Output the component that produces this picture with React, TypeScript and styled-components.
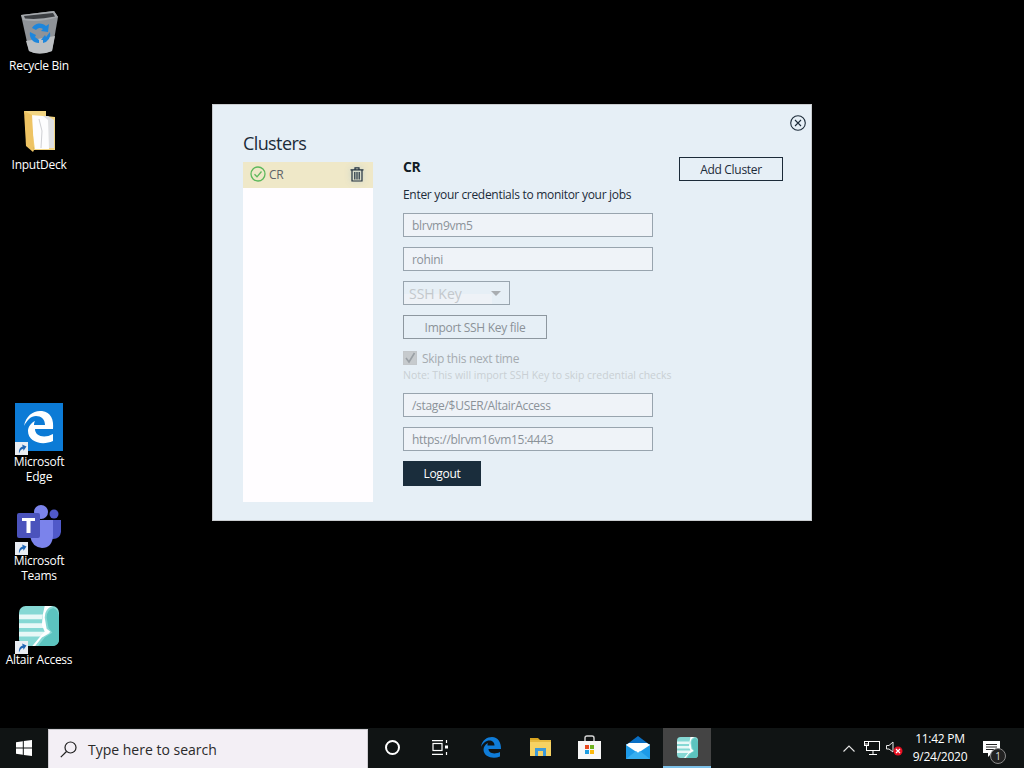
import styled, { createGlobalStyle } from 'styled-components';

const GlobalStyle = createGlobalStyle`
	html, body {
		margin: 0;
		padding: 0;
		height: 100%;
		background: #000;
		overflow: hidden;
		font-family: 'Open Sans', 'Noto Sans', sans-serif;
	}
`;

function ShortcutBadge() {
	return (
		<Badge>
			<svg width='13' height='13' viewBox='0 0 13 13'>
				<rect width='13' height='13' fill='#e9edf3' />
				<path d='M4 11.5 C3.5 7.5 5.5 5 7.8 4.6 L7 2.4 L11.5 4.6 L8.5 8.8 L8.2 6.8 C6.5 7 5.2 8.5 4 11.5Z' fill='#1f66b5' />
			</svg>
		</Badge>
	);
}

function RecycleBinIcon() {
	return (
		<svg width='37' height='43' viewBox='0 0 37 43'>
			<path d='M0 4 L33 0 L37 6 L31 40 Q18 45 8 40Z' fill='#8f9398' />
			<path d='M5 30 L34 25 L31 40 Q18 45 8 40Z' fill='#bcbfc2' />
			<path d='M0 4 L33 0 L37 6 Q18 12 2 9Z' fill='#a4a8ac' />
			<path d='M3 5 L32 2 L34 5.5 Q18 9 4 7.5Z' fill='#3b3e42' />
			<path d='M11 17 A9 9 0 0 1 25 15 L28 13 L27 21 L20 20 L22 18 A5 5 0 0 0 15 19Z M9 21 L15 24 L14 26 L18 29 L18 32 A9 9 0 0 1 9 21Z M29 21 A9 9 0 0 1 22 32 L22 29 L20 29 L24 24 L25 26 Z' fill='#1e86dc' />
		</svg>
	);
}

function FolderIcon() {
	return (
		<svg width='31' height='41' viewBox='0 0 31 41'>
			<path d='M0 0 L22 0 L22 5 L31 6 L31 39 L10 39 Z' fill='#f2d583' />
			<path d='M8 5 L24 5 L30 9 L30 37 L12 37 Z' fill='#dfe0e3' />
			<path d='M6 4 L19 5 L24 9 L25 38 L11 38 Z' fill='#fdfdfe' />
			<path d='M0 0 L8 4 L10 39 L9 41 L2 35 Z' fill='#eec363' />
			<path d='M15 8 L18 20 L17 37' stroke='#cfd0d4' strokeWidth='1' fill='none' />
		</svg>
	);
}

function EdgeTile() {
	return (
		<svg width='48' height='48' viewBox='0 0 48 48'>
			<rect width='48' height='48' fill='#0c7bd6' />
			<path
				d='M9 23 C11 12 19 7 27 8 C36 9 39 17 38 26 L20 26 C20 33 29 36 38 31 L38 38 C27 43 13 39 13 28 C13 24 16 20 20 18 C19 20 19 21 19 22 L30 22 C30 16 26 13 21 13 C16 13 12 17 9 23Z'
				fill='#fff'
			/>
		</svg>
	);
}

function TeamsIcon() {
	return (
		<svg width='46' height='44' viewBox='0 0 46 44'>
			<circle cx='38' cy='9' r='4.5' fill='#5059c9' />
			<path d='M33 15 L45 15 L45 27 Q44 34 37 34 L33 34Z' fill='#5059c9' />
			<circle cx='25' cy='7' r='7' fill='#7b83eb' />
			<path d='M14 15 L37 15 L37 31 Q36 43 26 43 Q16 42 14 31Z' fill='#7b83eb' />
			<path d='M1 10 Q1 8 3 8 L22 8 Q24 8 24 10 L24 31 Q24 33 22 33 L3 33 Q1 33 1 31Z' fill='#4b53bc' />
			<path d='M6 13 L19 13 L19 16 L14.5 16 L14.5 28 L10.5 28 L10.5 16 L6 16Z' fill='#fff' />
		</svg>
	);
}

function AltairIcon({ size }: { size: number }) {
	return (
		<svg width={size} height={size} viewBox='0 0 42 42'>
			<rect x='0' y='0' width='42' height='42' rx='7' fill='#86d8d4' />
			<path d='M0 9 L25 9 L24 14 L0 14Z M0 18 L25 18 L27 23 L0 23Z M0 27 L29 27 L33 28 L26 32 L0 32Z' fill='#e8f8f7' />
			<path d='M27 0 L35 0 Q27 3 27 12 L29 24 L33 27 L24 33 L17 42 L14 42 L24 30 L27 27 L24 20 L25 9Z' fill='#ffffff' />
			<path d='M36 2 Q42 4 42 12 L42 35 Q42 42 35 42 L20 42 L27 33 L35 28 L31 23 L29 12 Q29 4 36 2Z' fill='#5cc4bf' />
		</svg>
	);
}

function WindowsLogo() {
	return (
		<svg width='16' height='16' viewBox='0 0 16 16'>
			<path d='M0 2.2 L6.8 1.2 L6.8 7.5 L0 7.5Z M7.8 1 L16 0 L16 7.5 L7.8 7.5Z M0 8.5 L6.8 8.5 L6.8 14.8 L0 13.8Z M7.8 8.5 L16 8.5 L16 16 L7.8 15Z' fill='#fff' />
		</svg>
	);
}

function SearchIcon() {
	return (
		<svg width='17' height='17' viewBox='0 0 17 17' fill='none' stroke='#202020' strokeWidth='1.2'>
			<circle cx='10.5' cy='6.5' r='5.5' />
			<path d='M6.5 10.5 L0.8 16.2' />
		</svg>
	);
}

function TaskViewIcon() {
	return (
		<svg width='17' height='15' viewBox='0 0 17 15' fill='none' stroke='#fff' strokeWidth='1.2'>
			<path d='M0 0.6 H11 M0 14.4 H11' />
			<rect x='1' y='3.5' width='9' height='7' />
			<path d='M14.5 0 V3 M14.5 12 V15' />
			<rect x='13' y='5.5' width='3' height='3' fill='#fff' stroke='none' />
		</svg>
	);
}

function TaskbarEdgeIcon() {
	return (
		<svg width='20' height='21' viewBox='0 0 20 21'>
			<path
				d='M0 10 C1 3 6 0 11 0 C17 0 20 5 20 12 L7.5 12 C7.5 16 13 18 19 15 L19 19.5 C12 22.5 3 20 2.5 13 C2.5 10 4 7.5 7 6 C6.5 7 6.5 8 6.5 8.5 L13.5 8.5 C13.5 5 11 3.5 8.5 3.5 C5 3.5 2 6 0 10Z'
				fill='#0f7cd8'
			/>
		</svg>
	);
}

function ExplorerIcon() {
	return (
		<svg width='21' height='18' viewBox='0 0 21 18'>
			<path d='M0 0 H8 L10 2 V4 H0Z' fill='#d9a520' />
			<rect y='2' width='21' height='16' fill='#f6d263' />
			<rect y='2' width='21' height='2' fill='#e6b93f' />
			<path d='M5 18 V10 H16 V18 H13 V13 H8 V18Z' fill='#3d9ad9' />
		</svg>
	);
}

function StoreIcon() {
	return (
		<svg width='23' height='24' viewBox='0 0 23 24'>
			<path d='M7 7 V3 Q7 1 9 1 H14 Q16 1 16 3 V7' fill='none' stroke='#d8d8d8' strokeWidth='1.4' />
			<rect y='6' width='23' height='18' fill='#f7f7f7' />
			<rect x='7' y='10' width='4' height='4' fill='#e8481e' />
			<rect x='12' y='10' width='4' height='4' fill='#6fb320' />
			<rect x='7' y='15' width='4' height='4' fill='#1f9de0' />
			<rect x='12' y='15' width='4' height='4' fill='#fbb80c' />
		</svg>
	);
}

function MailIcon() {
	return (
		<svg width='24' height='23' viewBox='0 0 24 23'>
			<path d='M0 9 L12 0 L24 9Z' fill='#0a6fc4' />
			<rect y='8' width='24' height='15' fill='#1d9ae8' />
			<path d='M3 7 H21 L24 9 L12 17 L0 9Z' fill='#fff' />
			<path d='M0 23 L10 15 L12 17 L14 15 L24 23Z' fill='#37aef0' />
		</svg>
	);
}

function ChevronIcon() {
	return (
		<svg width='12' height='7' viewBox='0 0 12 7' fill='none' stroke='#e6e6e6' strokeWidth='1.1'>
			<path d='M0.5 6.5 L6 1 L11.5 6.5' />
		</svg>
	);
}

function NetworkIcon() {
	return (
		<svg width='16' height='14' viewBox='0 0 16 14' fill='none' stroke='#fff' strokeWidth='1'>
			<rect x='2.5' y='0.5' width='13' height='9' />
			<path d='M9 10 V13 M5 13.5 H13' />
			<rect x='0' y='0' width='5' height='5' fill='#fff' stroke='none' />
			<path d='M1 1.5 H4 M1 3 H4' stroke='#000' />
		</svg>
	);
}

function VolumeMutedIcon() {
	return (
		<svg width='17' height='15' viewBox='0 0 17 15'>
			<path d='M0.5 4.5 H3 L7 1 V11 L3 8 H0.5Z' fill='none' stroke='#e6e6e6' strokeWidth='1' />
			<circle cx='12' cy='10' r='4.5' fill='#e81123' />
			<path d='M10 8 L14 12 M14 8 L10 12' stroke='#fff' strokeWidth='1.2' />
		</svg>
	);
}

function NotificationIcon() {
	return (
		<NotifyWrap>
			<svg width='17' height='16' viewBox='0 0 17 16'>
				<path d='M0 0 H17 V12 H9 L5 16 V12 H0Z' fill='#fff' />
				<path d='M3 3.5 H14 M3 6 H14 M3 8.5 H11' stroke='#222' strokeWidth='1' />
			</svg>
			<NotifyCount>1</NotifyCount>
		</NotifyWrap>
	);
}

const desktopItems = [
	{ label: 'Recycle Bin', top: 8, icon: <RecycleBinIcon />, labelGap: 2 },
	{ label: 'InputDeck', top: 107, icon: <FolderIcon />, labelGap: 2 },
	{ label: 'Microsoft Edge', top: 403, icon: <EdgeTile />, labelGap: 3, shortcut: true },
	{ label: 'Microsoft Teams', top: 503, icon: <TeamsIcon />, labelGap: 2, shortcut: true },
	{ label: 'Altair Access', top: 602, icon: <AltairIcon size={40} />, labelGap: 2, shortcut: true },
];

export default function App(): JSX.Element {
	return (
		<>
			<GlobalStyle />
			<Screen>
				<Desktop>
					{desktopItems.map((item) => (
						<DesktopItem key={item.label} $top={item.top}>
							<IconBox>
								{item.icon}
								{item.shortcut && <ShortcutBadge />}
							</IconBox>
							<DesktopLabel $gap={item.labelGap}>{item.label}</DesktopLabel>
						</DesktopItem>
					))}

					<Dialog>
						<CloseButton>
							<svg width='16' height='16' viewBox='0 0 16 16' fill='none' stroke='#1c2b39' strokeWidth='1.1'>
								<circle cx='8' cy='8' r='7.3' />
								<path d='M5 5 L11 11 M11 5 L5 11' />
							</svg>
						</CloseButton>
						<Sidebar>
							<Title>Clusters</Title>
							<ClusterList>
								<ClusterRow>
									<svg width='16' height='16' viewBox='0 0 16 16' fill='none' stroke='#5cb85c' strokeWidth='1.3'>
										<circle cx='8' cy='8' r='7' />
										<path d='M4.5 8.2 L7 10.8 L11.5 5.5' />
									</svg>
									<ClusterName>CR</ClusterName>
									<TrashButton>
										<svg width='14' height='15' viewBox='0 0 14 15' fill='none' stroke='#22313f' strokeWidth='1.2'>
											<path d='M0.5 2.8 H13.5 M5 2.5 V0.8 H9 V2.5' />
											<path d='M2 3 V14 H12 V3' />
											<path d='M4.8 5 V12.5 M7 5 V12.5 M9.2 5 V12.5' />
										</svg>
									</TrashButton>
								</ClusterRow>
							</ClusterList>
						</Sidebar>
						<Details>
							<DetailHeader>
								<ClusterTitle>CR</ClusterTitle>
								<OutlineButton>Add Cluster</OutlineButton>
							</DetailHeader>
							<Intro>Enter your credentials to monitor your jobs</Intro>
							<Field>blrvm9vm5</Field>
							<Field>rohini</Field>
							<SelectBox>
								<SelectText>SSH Key</SelectText>
								<SelectArrow />
							</SelectBox>
							<ImportButton>Import SSH Key file</ImportButton>
							<CheckRow>
								<CheckBox>
									<svg width='12' height='12' viewBox='0 0 12 12' fill='none' stroke='#9aa0a5' strokeWidth='1.6'>
										<path d='M2 6 L5 10 L10.5 1' />
									</svg>
								</CheckBox>
								<CheckLabel>Skip this next time</CheckLabel>
							</CheckRow>
							<Note>Note: This will import SSH Key to skip credential checks</Note>
							<PathField>/stage/$USER/AltairAccess</PathField>
							<Field>https://blrvm16vm15:4443</Field>
							<LogoutButton>Logout</LogoutButton>
						</Details>
					</Dialog>
				</Desktop>

				<Taskbar>
					<StartButton>
						<WindowsLogo />
					</StartButton>
					<SearchBox>
						<SearchIcon />
						<SearchText>Type here to search</SearchText>
					</SearchBox>
					<TaskSlot>
						<CortanaRing />
					</TaskSlot>
					<TaskSlot>
						<TaskViewIcon />
					</TaskSlot>
					<PinnedApps>
						<TaskSlot>
							<TaskbarEdgeIcon />
						</TaskSlot>
						<TaskSlot>
							<ExplorerIcon />
						</TaskSlot>
						<TaskSlot>
							<StoreIcon />
						</TaskSlot>
						<TaskSlot>
							<MailIcon />
						</TaskSlot>
						<TaskSlot $active>
							<AltairIcon size={21} />
						</TaskSlot>
					</PinnedApps>
					<Tray>
						<TrayIcon>
							<ChevronIcon />
						</TrayIcon>
						<TrayIcon>
							<NetworkIcon />
						</TrayIcon>
						<TrayIcon>
							<VolumeMutedIcon />
						</TrayIcon>
						<Clock>
							<span>11:42 PM</span>
							<span>9/24/2020</span>
						</Clock>
						<NotificationIcon />
					</Tray>
				</Taskbar>
			</Screen>
		</>
	);
}

const Screen = styled.div`
	width: 1024px;
	height: 768px;
	display: flex;
	flex-direction: column;
	background: #000;
`;

const Desktop = styled.div`
	position: relative;
	flex: 1;
`;

const DesktopItem = styled.div<{ $top: number }>`
	position: absolute;
	left: 0;
	top: ${(p) => p.$top}px;
	width: 78px;
	display: flex;
	flex-direction: column;
	align-items: center;
`;

const IconBox = styled.div`
	position: relative;
	width: 48px;
	height: 48px;
	display: flex;
	align-items: center;
	justify-content: center;
`;

const Badge = styled.span`
	position: absolute;
	left: 0;
	bottom: 0;
	display: block;
	height: 13px;
`;

const DesktopLabel = styled.div<{ $gap: number }>`
	margin-top: ${(p) => p.$gap}px;
	color: #fff;
	font-size: 12px;
	line-height: 15px;
	letter-spacing: -0.25px;
	text-align: center;
	width: 70px;
`;

const Dialog = styled.div`
	position: absolute;
	left: 212px;
	top: 104px;
	width: 600px;
	height: 417px;
	box-sizing: border-box;
	border: 1px solid #c9cccf;
	background: #e6eff6;
	display: flex;
	padding: 28px 28px 0 30px;
	color: #1c2b39;
	letter-spacing: -0.3px;
`;

const CloseButton = styled.div`
	position: absolute;
	right: 5px;
	top: 10px;
	width: 16px;
	height: 16px;
	display: flex;
`;

const Sidebar = styled.div`
	width: 130px;
	display: flex;
	flex-direction: column;
`;

const Title = styled.div`
	font-size: 18px;
	line-height: 20px;
	height: 29px;
	letter-spacing: -0.6px;
	color: #1c2b39;
`;

const ClusterList = styled.div`
	height: 340px;
	background: #fffdff;
`;

const ClusterRow = styled.div`
	height: 26px;
	box-sizing: border-box;
	display: flex;
	align-items: center;
	padding: 0 9px 2px 7px;
	background: #efe8c8;
	gap: 3px;
`;

const ClusterName = styled.span`
	flex: 1;
	font-size: 12px;
	color: #5f6468;
`;

const TrashButton = styled.span`
	display: flex;
	width: 14px;
	height: 15px;
	filter: drop-shadow(0 0 3px rgba(170, 195, 205, 0.9));
`;

const Details = styled.div`
	margin-left: 30px;
	width: 380px;
	display: flex;
	flex-direction: column;
	align-items: flex-start;
	padding-top: 24px;
`;

const DetailHeader = styled.div`
	width: 100%;
	height: 24px;
	display: flex;
	justify-content: space-between;
	align-items: flex-start;
`;

const ClusterTitle = styled.div`
	font-size: 14px;
	line-height: 20px;
	font-weight: 700;
	color: #111c26;
`;

const OutlineButton = styled.div`
	width: 104px;
	height: 24px;
	box-sizing: border-box;
	border: 1px solid #1c2b39;
	font-size: 12px;
	line-height: 23px;
	text-align: center;
`;

const Intro = styled.div`
	margin-top: 5px;
	height: 27px;
	font-size: 12px;
	line-height: 18px;
	color: #1c2b39;
`;

const Field = styled.div`
	width: 250px;
	height: 24px;
	box-sizing: border-box;
	border: 1px solid #98a4ae;
	background: #eff3f8;
	padding-left: 8px;
	margin-bottom: 10px;
	font-size: 12px;
	line-height: 24px;
	color: #8b9298;
`;

const PathField = styled(Field)`
	margin-top: 10px;
`;

const SelectBox = styled.div`
	width: 107px;
	height: 24px;
	box-sizing: border-box;
	border: 1px solid #98a4ae;
	background: linear-gradient(#e6eff6 55%, #eef2f7 55%) no-repeat;
	background-size: 84% 100%;
	display: flex;
	align-items: center;
	padding: 0 8px 0 5px;
	margin-bottom: 10px;
`;

const SelectText = styled.span`
	flex: 1;
	font-size: 14px;
	letter-spacing: 0;
	color: #c3c8cc;
`;

const SelectArrow = styled.span`
	width: 0;
	height: 0;
	border-left: 5px solid transparent;
	border-right: 5px solid transparent;
	border-top: 5px solid #a9adb1;
`;

const ImportButton = styled.div`
	width: 144px;
	height: 24px;
	box-sizing: border-box;
	border: 1px solid #8d979f;
	font-size: 12px;
	line-height: 23px;
	text-align: center;
	color: #8b9298;
`;

const CheckRow = styled.div`
	margin-top: 11px;
	height: 16px;
	display: flex;
	align-items: center;
	gap: 5px;
`;

const CheckBox = styled.span`
	width: 14px;
	height: 14px;
	box-sizing: border-box;
	border: 1px solid #c3c7ca;
	background: #c6cacd;
	display: flex;
	align-items: center;
	justify-content: center;
`;

const CheckLabel = styled.span`
	font-size: 12px;
	color: #a5abb0;
`;

const Note = styled.div`
	margin-top: 1px;
	font-size: 10.5px;
	line-height: 16px;
	letter-spacing: 0;
	color: #c9cfd4;
	white-space: nowrap;
`;

const LogoutButton = styled.div`
	width: 78px;
	height: 25px;
	background: #1a2d3c;
	color: #fff;
	font-size: 12px;
	line-height: 25px;
	text-align: center;
`;

const Taskbar = styled.div`
	height: 40px;
	background: #101414;
	display: flex;
	align-items: stretch;
`;

const StartButton = styled.div`
	width: 48px;
	display: flex;
	align-items: center;
	justify-content: center;
`;

const SearchBox = styled.div`
	width: 320px;
	margin-top: 1px;
	box-sizing: border-box;
	background: #f3eff5;
	border: 1px solid #cfcdd2;
	border-bottom: 0;
	display: flex;
	align-items: center;
	gap: 11px;
	padding-left: 11px;
`;

const SearchText = styled.span`
	font-size: 14px;
	color: #2a2a2a;
`;

const PinnedApps = styled.div`
	display: flex;
	gap: 1px;
	margin-left: 3px;
`;

const TaskSlot = styled.div<{ $active?: boolean }>`
	width: 48px;
	box-sizing: border-box;
	display: flex;
	align-items: center;
	justify-content: center;
	background: ${(p) => (p.$active ? '#444444' : 'transparent')};
	border-bottom: 2px solid ${(p) => (p.$active ? '#7cc0e8' : 'transparent')};
`;

const CortanaRing = styled.span`
	width: 15px;
	height: 15px;
	box-sizing: border-box;
	border: 2px solid #fff;
	border-radius: 50%;
`;

const Tray = styled.div`
	flex: 1;
	display: flex;
	align-items: center;
	justify-content: flex-end;
	padding-right: 17px;
`;

const TrayIcon = styled.span`
	width: 23px;
	display: flex;
	justify-content: center;
`;

const Clock = styled.div`
	width: 68px;
	display: flex;
	flex-direction: column;
	align-items: center;
	color: #fff;
	font-size: 12px;
	line-height: 18px;
	letter-spacing: -0.25px;
`;

const NotifyWrap = styled.span`
	position: relative;
	margin-left: 9px;
	width: 24px;
	height: 24px;
	display: block;
	padding-top: 4px;
	box-sizing: border-box;
`;

const NotifyCount = styled.span`
	position: absolute;
	left: 7px;
	top: 12px;
	width: 16px;
	height: 16px;
	box-sizing: border-box;
	border: 1px solid #8a8a8a;
	border-radius: 50%;
	background: #222;
	color: #ddd;
	font-size: 10px;
	line-height: 14px;
	text-align: center;
`;
